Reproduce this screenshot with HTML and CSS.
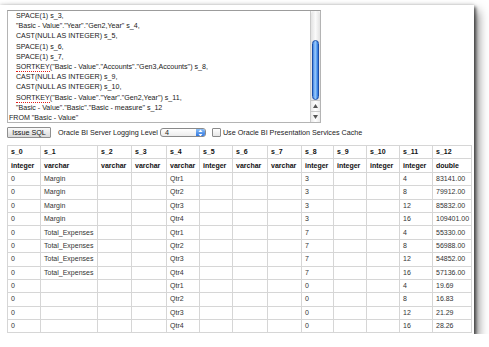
FILE: index.html
```html
<!DOCTYPE html>
<html>
  <head>
    <meta charset="utf-8" />
    <title>Issue SQL</title>
    <link rel="stylesheet" href="styles.css">
  </head>
  <body class="page">
    <div class="window">
      <div class="sql-box">
        <div class="sql-text">
          <div class="sql-line indent">SPACE(1) s_3,</div>
          <div class="sql-line indent">"Basic - Value"."Year"."Gen2,Year" s_4,</div>
          <div class="sql-line indent">CAST(NULL AS INTEGER) s_5,</div>
          <div class="sql-line indent">SPACE(1) s_6,</div>
          <div class="sql-line indent">SPACE(1) s_7,</div>
          <div class="sql-line indent"><span class="misspelled">SORTKEY</span>("Basic - Value"."Accounts"."Gen3,Accounts") s_8,</div>
          <div class="sql-line indent">CAST(NULL AS INTEGER) s_9,</div>
          <div class="sql-line indent">CAST(NULL AS INTEGER) s_10,</div>
          <div class="sql-line indent"><span class="misspelled">SORTKEY</span>("Basic - Value"."Year"."Gen2,Year") s_11,</div>
          <div class="sql-line indent">"Basic - Value"."Basic"."Basic - measure" s_12</div>
          <div class="sql-line">FROM "Basic - Value"</div>
        </div>
        <div class="scrollbar">
          <div class="scroll-track">
            <div class="scroll-thumb"></div>
          </div>
          <div class="scroll-arrow">
            <svg width="5" height="4" viewBox="0 0 5 4"><path d="M2.5 0 L5 4 L0 4 Z" fill="#555"/></svg>
          </div>
          <div class="scroll-arrow">
            <svg width="5" height="4" viewBox="0 0 5 4"><path d="M0 0 L5 0 L2.5 4 Z" fill="#555"/></svg>
          </div>
        </div>
      </div>

      <div class="toolbar">
        <button class="issue-button">Issue SQL</button>
        <span class="toolbar-label">Oracle BI Server Logging Level</span>
        <div class="level-select">
          <span class="level-value">4</span>
          <span class="level-stepper">
            <svg width="5" height="8" viewBox="0 0 5 8">
              <path d="M2.5 0.5 L4.5 3 L0.5 3 Z" fill="#fff"/>
              <path d="M0.5 5 L4.5 5 L2.5 7.5 Z" fill="#fff"/>
            </svg>
          </span>
        </div>
        <span class="checkbox"></span>
        <span class="toolbar-label">Use Oracle BI Presentation Services Cache</span>
      </div>

      <table class="results">
        <colgroup>
          <col style="width: 33px"><col style="width: 57px"><col style="width: 34px"><col style="width: 35px">
          <col style="width: 33px"><col style="width: 33px"><col style="width: 35px"><col style="width: 34px">
          <col style="width: 32px"><col style="width: 33px"><col style="width: 33px"><col style="width: 33px">
          <col style="width: 39px">
        </colgroup>
        <thead>
          <tr>
            <th>s_0</th><th>s_1</th><th>s_2</th><th>s_3</th><th>s_4</th><th>s_5</th><th>s_6</th>
            <th>s_7</th><th>s_8</th><th>s_9</th><th>s_10</th><th>s_11</th><th>s_12</th>
          </tr>
          <tr>
            <th>integer</th><th>varchar</th><th>varchar</th><th>varchar</th><th>varchar</th><th>integer</th><th>varchar</th>
            <th>varchar</th><th>integer</th><th>integer</th><th>integer</th><th>integer</th><th>double</th>
          </tr>
        </thead>
        <tbody>
          <tr><td>0</td><td>Margin</td><td></td><td></td><td>Qtr1</td><td></td><td></td><td></td><td>3</td><td></td><td></td><td>4</td><td>83141.00</td></tr>
          <tr><td>0</td><td>Margin</td><td></td><td></td><td>Qtr2</td><td></td><td></td><td></td><td>3</td><td></td><td></td><td>8</td><td>79912.00</td></tr>
          <tr><td>0</td><td>Margin</td><td></td><td></td><td>Qtr3</td><td></td><td></td><td></td><td>3</td><td></td><td></td><td>12</td><td>85832.00</td></tr>
          <tr><td>0</td><td>Margin</td><td></td><td></td><td>Qtr4</td><td></td><td></td><td></td><td>3</td><td></td><td></td><td>16</td><td>109401.00</td></tr>
          <tr><td>0</td><td>Total_Expenses</td><td></td><td></td><td>Qtr1</td><td></td><td></td><td></td><td>7</td><td></td><td></td><td>4</td><td>55330.00</td></tr>
          <tr><td>0</td><td>Total_Expenses</td><td></td><td></td><td>Qtr2</td><td></td><td></td><td></td><td>7</td><td></td><td></td><td>8</td><td>56988.00</td></tr>
          <tr><td>0</td><td>Total_Expenses</td><td></td><td></td><td>Qtr3</td><td></td><td></td><td></td><td>7</td><td></td><td></td><td>12</td><td>54852.00</td></tr>
          <tr><td>0</td><td>Total_Expenses</td><td></td><td></td><td>Qtr4</td><td></td><td></td><td></td><td>7</td><td></td><td></td><td>16</td><td>57136.00</td></tr>
          <tr><td>0</td><td></td><td></td><td></td><td>Qtr1</td><td></td><td></td><td></td><td>0</td><td></td><td></td><td>4</td><td>19.69</td></tr>
          <tr><td>0</td><td></td><td></td><td></td><td>Qtr2</td><td></td><td></td><td></td><td>0</td><td></td><td></td><td>8</td><td>16.83</td></tr>
          <tr><td>0</td><td></td><td></td><td></td><td>Qtr3</td><td></td><td></td><td></td><td>0</td><td></td><td></td><td>12</td><td>21.29</td></tr>
          <tr><td>0</td><td></td><td></td><td></td><td>Qtr4</td><td></td><td></td><td></td><td>0</td><td></td><td></td><td>16</td><td>28.26</td></tr>
        </tbody>
      </table>
    </div>
  </body>
</html>
```

FILE: styles.css
```css
.page {
  margin: 0;
  background: #ffffff;
  font-family: "Liberation Sans", Arial, sans-serif;
  font-size: 7px;
  color: #222;
  overflow: hidden;
}

.window {
  width: 474px;
  margin-top: 5px;
  background: #ffffff;
  box-sizing: border-box;
  padding: 5px 0 1px 7px;
  box-shadow: 2px 2px 3px rgba(0, 0, 0, 0.55),
    4px 6px 10px rgba(0, 0, 0, 0.5),
    0 -1px 3px rgba(0, 0, 0, 0.12);
}

/* sql editor */

.sql-box {
  display: flex;
  width: 314px;
  height: 113px;
  box-sizing: border-box;
  border: 1px solid #b4b4b4;
  border-top-color: #9c9c9c;
  background: #ffffff;
}

.sql-text {
  flex: 1;
  padding: 0 0 0 1px;
  overflow: hidden;
  white-space: nowrap;
  font-size: 7.1px;
  color: #1a1a1a;
}

.sql-line {
  height: 10.2px;
  line-height: 10.2px;
}

.sql-line.indent {
  padding-left: 7px;
}

.misspelled {
  display: inline-block;
  line-height: 7px;
  border-bottom: 1px dotted #e0201c;
}

.scrollbar {
  display: flex;
  flex-direction: column;
  width: 9px;
  border-left: 1px solid #c9c9c9;
  background: #f4f4f4;
}

.scroll-track {
  flex: 1;
  padding: 29px 1px 0;
  background: linear-gradient(to right, #e2e2e2, #fafafa 50%, #e2e2e2);
  border-radius: 4px 4px 0 0;
}

.scroll-thumb {
  height: 60px;
  border-radius: 4px;
  border: 1px solid #1b4fa8;
  box-sizing: border-box;
  background: linear-gradient(to right, #3f85e6, #9dcbfa 45%, #63a6f2 70%, #2a6fd8);
}

.scroll-arrow {
  display: flex;
  align-items: center;
  justify-content: center;
  height: 10px;
  border-top: 1px solid #c9c9c9;
  background: linear-gradient(to right, #eaeaea, #ffffff 50%, #eaeaea);
}

/* controls */

.toolbar {
  display: flex;
  align-items: center;
  height: 11px;
  margin-top: 4px;
  font-size: 7.2px;
}

.issue-button {
  width: 44px;
  height: 11px;
  padding: 0;
  border: 1px solid #8f8f8f;
  border-radius: 1px;
  background: linear-gradient(#fbfbfb, #d9d9d9);
  font-family: "Liberation Sans", Arial, sans-serif;
  font-size: 7.2px;
  color: #111;
}

.toolbar-label {
  margin-left: 7px;
  color: #222;
  white-space: nowrap;
}

.toolbar-label:last-child {
  margin-left: 2px;
}

.level-select {
  display: flex;
  align-items: center;
  width: 46px;
  height: 9px;
  margin-left: 2px;
  box-sizing: border-box;
  border: 1px solid #8a8a8a;
  border-radius: 3px;
  background: linear-gradient(#ffffff, #ececec);
  overflow: hidden;
}

.level-value {
  flex: 1;
  padding-left: 4px;
  line-height: 7px;
}

.level-stepper {
  display: flex;
  align-items: center;
  justify-content: center;
  width: 9px;
  height: 100%;
  background: linear-gradient(#8ec0f7, #2f76df);
}

.checkbox {
  width: 7px;
  height: 7px;
  margin-left: 6px;
  border: 1px solid #8a8a8a;
  border-radius: 1px;
  background: linear-gradient(#ffffff, #e6e6e6);
}

/* results */

.results {
  width: 464px;
  margin-top: 7px;
  table-layout: fixed;
  border-collapse: collapse;
  border: 1px solid #cfcfcf;
}

.results tr {
  height: 13.4px;
}

.results th,
.results td {
  line-height: 8px;
  padding: 0 0 0 3px;
  border: 1px solid #d6d6d6;
  text-align: left;
  white-space: nowrap;
  overflow: hidden;
}

.results th {
  font-weight: bold;
  color: #111;
}

.results td {
  color: #333;
}
```
